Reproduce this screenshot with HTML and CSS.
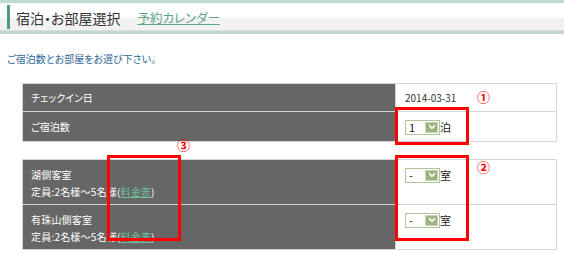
FILE: index.html
```html
<!DOCTYPE html>
<html lang="ja">
<head>
<meta charset="utf-8">
<title>宿泊・お部屋選択</title>
<link rel="stylesheet" href="styles.css">
</head>
<body>
<div class="page">
  <div class="header">
    <div class="header-inner">
      <h1 class="title">宿泊・お部屋選択</h1>
      <a class="cal-link" href="#">予約カレンダー</a>
    </div>
  </div>

  <p class="lead">ご宿泊数とお部屋をお選び下さい。</p>

  <table class="form form-top">
    <tr>
      <th>チェックイン日</th>
      <td>2014-03-31</td>
    </tr>
    <tr>
      <th>ご宿泊数</th>
      <td><span class="sel"><span class="sel-val">1</span><span class="sel-btn"><svg width="8" height="6" viewBox="0 0 8 6"><path d="M1 1.2 L4 4.4 L7 1.2" fill="none" stroke="#fff" stroke-width="1.6"/></svg></span></span><span class="unit">泊</span></td>
    </tr>
  </table>

  <table class="form form-rooms">
    <tr>
      <th>湖側客室<br>定員:2名様～5名様(<a class="price" href="#">料金表</a>)</th>
      <td><span class="sel"><span class="sel-val">-</span><span class="sel-btn"><svg width="8" height="6" viewBox="0 0 8 6"><path d="M1 1.2 L4 4.4 L7 1.2" fill="none" stroke="#fff" stroke-width="1.6"/></svg></span></span><span class="unit">室</span></td>
    </tr>
    <tr>
      <th>有珠山側客室<br>定員:2名様～5名様(<a class="price" href="#">料金表</a>)</th>
      <td><span class="sel"><span class="sel-val">-</span><span class="sel-btn"><svg width="8" height="6" viewBox="0 0 8 6"><path d="M1 1.2 L4 4.4 L7 1.2" fill="none" stroke="#fff" stroke-width="1.6"/></svg></span></span><span class="unit">室</span></td>
    </tr>
  </table>

  <div class="mark mark-nights"></div>
  <div class="mark mark-price"></div>
  <div class="mark mark-rooms"></div>
  <span class="num num-1">①</span>
  <span class="num num-2">②</span>
  <span class="num num-3">③</span>
</div>
</body>
</html>
```
FILE: styles.css
```css
html, body {
  margin: 0;
  padding: 0;
  background: #fff;
}
body {
  font-family: "Noto Sans CJK JP", "Noto Sans", sans-serif;
  font-feature-settings: "palt";
  color: #333;
}
.page {
  position: relative;
  width: 564px;
  height: 254px;
  overflow: hidden;
}
.header {
  border-top: 3px solid #c2d9d0;
  border-bottom: 3px solid #c2d9d0;
  height: 28px;
  background: linear-gradient(#fff 0, #fff 15px, #f2f2f2 15px, #f2f2f2 27px, #dcdcdc 27px, #dcdcdc 28px);
}
.header-inner {
  display: flex;
  align-items: center;
  margin: 2px 0 0 7px;
  height: 24px;
  border-left: 3px solid #4f9a7d;
  padding-left: 6px;
}
.title {
  margin: 0;
  font-size: 14px;
  font-weight: normal;
  color: #333;
  line-height: 24px;
  padding-top: 2px;
}
.cal-link {
  margin-left: 17px;
  font-size: 12.5px;
  line-height: 24px;
  padding-top: 2px;
  color: #5aa58a;
  text-decoration: underline;
}
.lead {
  margin: 18px 0 0 7px;
  font-size: 10px;
  line-height: 14px;
  color: #336699;
}
.form {
  margin-left: 22px;
  width: 535px;
  border-collapse: collapse;
  table-layout: fixed;
  border: 1px solid #d6d6d6;
}
.form-top {
  margin-top: 17px;
}
.form-rooms {
  margin-top: 17px;
}
.form th {
  width: 356px;
  background: #666;
  color: #fff;
  font-weight: normal;
  text-align: left;
  font-size: 10px;
  line-height: 17px;
  padding: 5px 8px;
  border: 1px solid #d6d6d6;
  vertical-align: middle;
}
.form td {
  font-size: 10px;
  line-height: 17px;
  padding: 5px 9px;
  border: 1px solid #d6d6d6;
  vertical-align: middle;
  color: #333;
}
.form-rooms tr {
  height: 45px;
}
.form-rooms th {
  padding: 6px 8px 4px 8px;
  vertical-align: top;
  letter-spacing: 0.2px;
}
.form-rooms td {
  vertical-align: top;
  padding-top: 5px;
}
.sel {
  display: inline-flex;
  align-items: center;
  justify-content: space-between;
  box-sizing: border-box;
  width: 35px;
  height: 15px;
  border: 1px solid #b2c59a;
  background: #fff;
  padding: 0 1px 0 3px;
  vertical-align: middle;
}
.sel-val {
  font-size: 11px;
  line-height: 13px;
  color: #222;
}
.sel-btn {
  display: flex;
  align-items: center;
  justify-content: center;
  box-sizing: border-box;
  width: 13px;
  height: 11px;
  background: #9db382;
  border: 1px solid #c6d5b5;
}
.unit {
  font-size: 11px;
  vertical-align: middle;
  color: #222;
}
.price {
  color: #6cc09a;
  text-decoration: underline;
}
.mark {
  position: absolute;
  box-sizing: border-box;
  border: 3px solid #f00;
}
.mark-nights {
  left: 395px;
  top: 107px;
  width: 74px;
  height: 38px;
}
.mark-price {
  left: 107px;
  top: 155px;
  width: 74px;
  height: 86px;
}
.mark-rooms {
  left: 395px;
  top: 155px;
  width: 74px;
  height: 86px;
}
.num {
  position: absolute;
  color: #f00;
  font-size: 13px;
  line-height: 13px;
  font-weight: bold;
}
.num-1 {
  left: 477px;
  top: 90px;
}
.num-2 {
  left: 477px;
  top: 160px;
}
.num-3 {
  left: 177px;
  top: 138px;
}
```
